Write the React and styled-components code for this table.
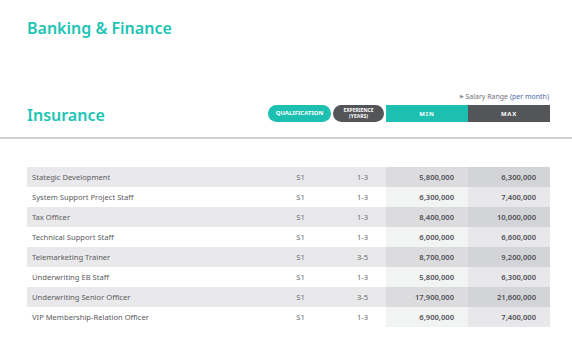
import styled, { createGlobalStyle } from "styled-components";

const GlobalStyle = createGlobalStyle`
  body {
    margin: 0;
    background: #ffffff;
    font-family: "Noto Sans", "Liberation Sans", sans-serif;
  }
`;

const COLS = "241px 65px 53px 82px 82px";

const rows = [
  { title: "Stategic Development", qual: "S1", exp: "1-3", min: "5,800,000", max: "6,300,000" },
  { title: "System Support Project Staff", qual: "S1", exp: "1-3", min: "6,300,000", max: "7,400,000" },
  { title: "Tax Officer", qual: "S1", exp: "1-3", min: "8,400,000", max: "10,000,000" },
  { title: "Technical Support Staff", qual: "S1", exp: "1-3", min: "6,000,000", max: "6,600,000" },
  { title: "Telemarketing Trainer", qual: "S1", exp: "3-5", min: "8,700,000", max: "9,200,000" },
  { title: "Underwriting EB Staff", qual: "S1", exp: "1-3", min: "5,800,000", max: "6,300,000" },
  { title: "Underwriting Senior Officer", qual: "S1", exp: "3-5", min: "17,900,000", max: "21,600,000" },
  { title: "VIP Membership-Relation Officer", qual: "S1", exp: "1-3", min: "6,900,000", max: "7,400,000" },
];

const App = () => {
  return (
    <Page>
      <GlobalStyle />
      <PageTitle>Banking &amp; Finance</PageTitle>
      <SectionHeader>
        <SectionTitle>Insurance</SectionTitle>
        <SalaryNote>
          <span className="arrow">&#9654;</span> Salary Range <span className="unit">(per month)</span>
        </SalaryNote>
        <Pill $bg="#1cbfb0" $size="6px">QUALIFICATION</Pill>
        <Pill $bg="#545558" $size="5px">
          EXPERIENCE
          <br />
          (YEARS)
        </Pill>
        <HeadCell $bg="#1cbfb0">MIN</HeadCell>
        <HeadCell $bg="#545558">MAX</HeadCell>
      </SectionHeader>
      <Divider />
      <Table>
        {rows.map((r, i) => (
          <Row key={r.title} $odd={i % 2 === 0}>
            <NameCell>{r.title}</NameCell>
            <CenterCell>{r.qual}</CenterCell>
            <CenterCell $shift="6px">{r.exp}</CenterCell>
            <MoneyCell $bg={i % 2 === 0 ? "#dcdcde" : "#f2f3f3"}>{r.min}</MoneyCell>
            <MoneyCell $bg={i % 2 === 0 ? "#d3d4d7" : "#e8e8ea"}>{r.max}</MoneyCell>
          </Row>
        ))}
      </Table>
    </Page>
  );
};

export default App;

const Page = styled.div`
  width: 572px;
  height: 350px;
  overflow: hidden;
  padding-top: 18px;
  box-sizing: border-box;
`;

const PageTitle = styled.h1`
  margin: 0 0 0 27px;
  font-size: 16px;
  line-height: 20px;
  font-weight: 600;
  color: #1cc4b4;
`;

const SectionHeader = styled.div`
  display: grid;
  grid-template-columns: ${COLS};
  grid-template-rows: 14px 17px;
  margin: 53px 0 0 27px;
`;

const SectionTitle = styled.h2`
  grid-column: 1;
  grid-row: 1 / span 2;
  align-self: end;
  margin: 0;
  font-size: 16px;
  line-height: 20px;
  font-weight: 600;
  color: #1cc4b4;
  transform: translateY(3px);
`;

const SalaryNote = styled.div`
  grid-column: 2 / span 4;
  grid-row: 1;
  text-align: right;
  font-size: 7px;
  line-height: 10px;
  color: #6f7278;
  padding-right: 1px;

  & .arrow {
    font-size: 5px;
    color: #8a8f98;
    vertical-align: 1px;
  }

  & .unit {
    color: #4f6aa8;
  }
`;

const Pill = styled.div`
  grid-row: 2;
  width: calc(100% - 2px);
  height: 17px;
  border-radius: 9px;
  background: ${(p) => p.$bg};
  color: #ffffff;
  display: flex;
  align-items: center;
  justify-content: center;
  text-align: center;
  font-size: ${(p) => p.$size};
  line-height: 5.5px;
  font-weight: 700;
`;

const HeadCell = styled.div`
  grid-row: 2;
  height: 17px;
  background: ${(p) => p.$bg};
  color: #ffffff;
  display: flex;
  align-items: center;
  justify-content: center;
  font-size: 6px;
  font-weight: 700;
  letter-spacing: 0.8px;
`;

const Divider = styled.div`
  height: 2px;
  background: #cfcfcf;
  margin-top: 15px;
`;

const Table = styled.div`
  margin: 28px 0 0 27px;
  width: 523px;
`;

const Row = styled.div`
  display: grid;
  grid-template-columns: ${COLS};
  height: 20px;
  background: ${(p) => (p.$odd ? "#e9e9eb" : "#ffffff")};
  font-size: 7.6px;
  color: #5a5b5e;
`;

const NameCell = styled.div`
  display: flex;
  align-items: center;
  padding-left: 5px;
`;

const CenterCell = styled.div`
  display: flex;
  align-items: center;
  justify-content: center;
  padding-left: ${(p) => p.$shift || "0"};
  color: #6a6b6e;
`;

const MoneyCell = styled.div`
  display: flex;
  align-items: center;
  justify-content: flex-end;
  padding-right: 14px;
  background: ${(p) => p.$bg};
  font-weight: 600;
  color: #505155;
`;
